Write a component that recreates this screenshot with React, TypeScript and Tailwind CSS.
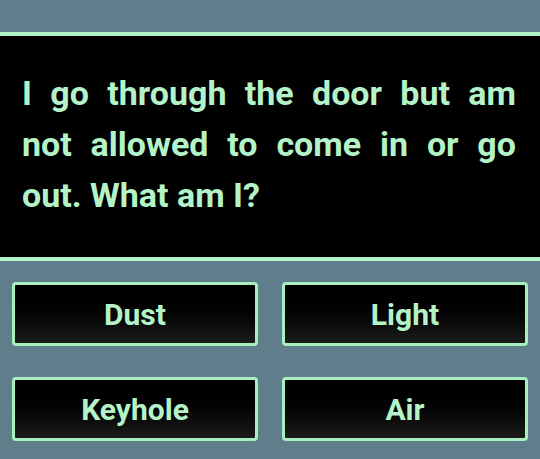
export default function App() {
  const answers = ["Dust", "Light", "Keyhole", "Air"];
  const lines = ["I go through the door but am", "not allowed to come in or go", "out. What am I?"];

  return (
    <div className="min-h-screen w-full bg-[#607d8b] pt-8 font-['Roboto',sans-serif]">
      <div className="border-y-4 border-[#b4f3c8] bg-black pl-[22px] pr-[24px] pt-[32px] pb-[36px]">
        <div className="text-[34px] font-bold leading-[51px] text-[#b4f3c8]">
          {lines.map((l, i) => (
            <div key={i} className={i < lines.length - 1 ? "text-justify [text-align-last:justify]" : "text-left"}>
              {l}
            </div>
          ))}
        </div>
      </div>
      <div className="grid grid-cols-2 gap-x-6 gap-y-[31px] px-3 pt-[21px]">
        {answers.map((a) => (
          <button
            key={a}
            className="flex h-16 items-center justify-center rounded-[4px] border-[3px] border-[#a8efbf] bg-gradient-to-b from-black to-[#1c1c1c] text-[30px] font-bold text-[#b4f3c8]"
          >
            {a}
          </button>
        ))}
      </div>
    </div>
  );
}
